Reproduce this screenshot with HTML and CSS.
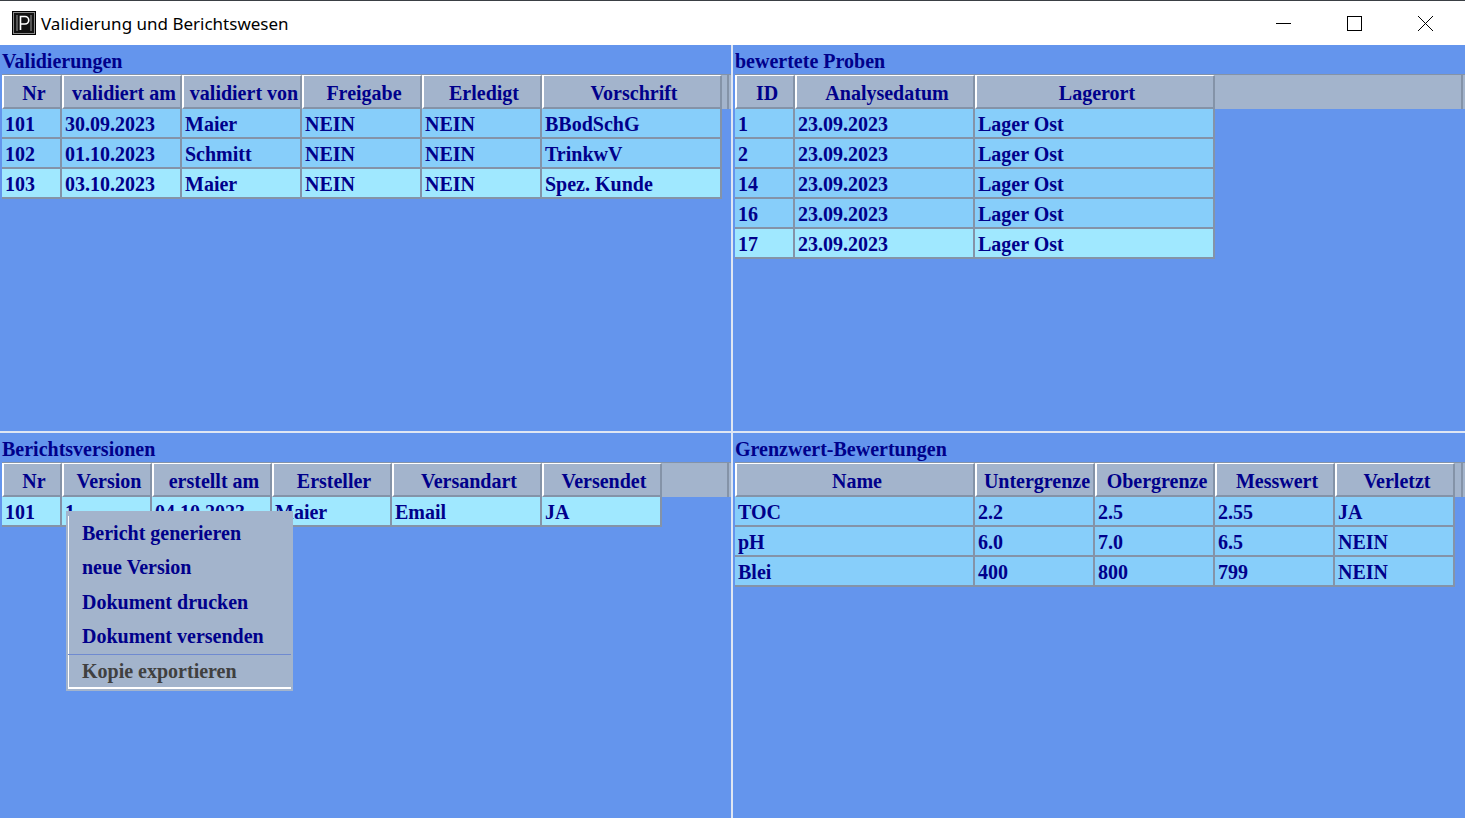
FILE: index.html
```html
<!DOCTYPE html>
<html lang="de">
<head>
    <meta charset="UTF-8">
    <title>Validierung und Berichtswesen</title>
    <link rel="stylesheet" href="styles.css">
</head>
<body>
    <div class="window">
        <div class="titlebar">
            <svg class="app-icon" width="24" height="24" viewBox="0 0 24 24">
                <rect width="24" height="24" fill="#000"/>
                <rect x="1.5" y="1.5" width="21" height="21" fill="#111" stroke="#8a8a8a"/>
                <rect x="4" y="4" width="2" height="16" fill="#555"/>
                <rect x="18" y="4" width="2" height="16" fill="#555"/>
                <path d="M8.5 19V5.5h4.5a3.7 3.7 0 0 1 0 7.5H8.5" fill="none" stroke="#fff" stroke-width="1.6"/>
            </svg>
            <span class="title">Validierung und Berichtswesen</span>
            <div class="win-buttons">
                <svg class="win-btn" width="70" height="20" viewBox="0 0 70 20"><path d="M21 10.5h15" stroke="#000" fill="none"/></svg>
                <svg class="win-btn" width="70" height="20" viewBox="0 0 70 20"><rect x="22.5" y="3.5" width="14" height="14" stroke="#000" fill="none"/></svg>
                <svg class="win-btn" width="70" height="20" viewBox="0 0 70 20"><path d="M23 3l15 15M38 3L23 18" stroke="#000" fill="none"/></svg>
            </div>
        </div>

        <div class="panes">
            <section class="pane">
                <h2>Validierungen</h2>
                <div class="grid">
                    <div class="row head">
                        <div class="cell w60">Nr</div>
                        <div class="cell w120">validiert am</div>
                        <div class="cell w120">validiert von</div>
                        <div class="cell w120">Freigabe</div>
                        <div class="cell w120">Erledigt</div>
                        <div class="cell w180">Vorschrift</div>
                        <div class="filler"></div>
                    </div>
                    <div class="row">
                        <div class="cell w60">101</div>
                        <div class="cell w120">30.09.2023</div>
                        <div class="cell w120">Maier</div>
                        <div class="cell w120">NEIN</div>
                        <div class="cell w120">NEIN</div>
                        <div class="cell w180">BBodSchG</div>
                    </div>
                    <div class="row">
                        <div class="cell w60">102</div>
                        <div class="cell w120">01.10.2023</div>
                        <div class="cell w120">Schmitt</div>
                        <div class="cell w120">NEIN</div>
                        <div class="cell w120">NEIN</div>
                        <div class="cell w180">TrinkwV</div>
                    </div>
                    <div class="row light">
                        <div class="cell w60">103</div>
                        <div class="cell w120">03.10.2023</div>
                        <div class="cell w120">Maier</div>
                        <div class="cell w120">NEIN</div>
                        <div class="cell w120">NEIN</div>
                        <div class="cell w180">Spez. Kunde</div>
                    </div>
                </div>
            </section>

            <section class="pane">
                <h2>bewertete Proben</h2>
                <div class="grid">
                    <div class="row head">
                        <div class="cell w60">ID</div>
                        <div class="cell w180">Analysedatum</div>
                        <div class="cell w240">Lagerort</div>
                        <div class="filler"></div>
                    </div>
                    <div class="row"><div class="cell w60">1</div><div class="cell w180">23.09.2023</div><div class="cell w240">Lager Ost</div></div>
                    <div class="row"><div class="cell w60">2</div><div class="cell w180">23.09.2023</div><div class="cell w240">Lager Ost</div></div>
                    <div class="row"><div class="cell w60">14</div><div class="cell w180">23.09.2023</div><div class="cell w240">Lager Ost</div></div>
                    <div class="row"><div class="cell w60">16</div><div class="cell w180">23.09.2023</div><div class="cell w240">Lager Ost</div></div>
                    <div class="row light"><div class="cell w60">17</div><div class="cell w180">23.09.2023</div><div class="cell w240">Lager Ost</div></div>
                </div>
            </section>

            <section class="pane">
                <h2>Berichtsversionen</h2>
                <div class="grid">
                    <div class="row head">
                        <div class="cell w60">Nr</div>
                        <div class="cell w90">Version</div>
                        <div class="cell w120">erstellt am</div>
                        <div class="cell w120">Ersteller</div>
                        <div class="cell w150">Versandart</div>
                        <div class="cell w120">Versendet</div>
                        <div class="filler"></div>
                    </div>
                    <div class="row light">
                        <div class="cell w60">101</div>
                        <div class="cell w90">1</div>
                        <div class="cell w120">04.10.2023</div>
                        <div class="cell w120">Maier</div>
                        <div class="cell w150">Email</div>
                        <div class="cell w120">JA</div>
                    </div>
                </div>
                <ul class="menu">
                    <li>Bericht generieren</li>
                    <li>neue Version</li>
                    <li>Dokument drucken</li>
                    <li>Dokument versenden</li>
                    <li class="disabled">Kopie exportieren</li>
                </ul>
            </section>

            <section class="pane">
                <h2>Grenzwert-Bewertungen</h2>
                <div class="grid">
                    <div class="row head">
                        <div class="cell w240">Name</div>
                        <div class="cell w120">Untergrenze</div>
                        <div class="cell w120">Obergrenze</div>
                        <div class="cell w120">Messwert</div>
                        <div class="cell w120">Verletzt</div>
                        <div class="filler"></div>
                    </div>
                    <div class="row"><div class="cell w240">TOC</div><div class="cell w120">2.2</div><div class="cell w120">2.5</div><div class="cell w120">2.55</div><div class="cell w120">JA</div></div>
                    <div class="row"><div class="cell w240">pH</div><div class="cell w120">6.0</div><div class="cell w120">7.0</div><div class="cell w120">6.5</div><div class="cell w120">NEIN</div></div>
                    <div class="row"><div class="cell w240">Blei</div><div class="cell w120">400</div><div class="cell w120">800</div><div class="cell w120">799</div><div class="cell w120">NEIN</div></div>
                </div>
            </section>
        </div>
    </div>
</body>
</html>
```

FILE: styles.css
```css
html, body {
    margin: 0;
    padding: 0;
}
body {
    background-color: #6495ed;
    font-family: "Liberation Serif", serif;
    overflow: hidden;
}
.window {
    height: 818px;
    display: flex;
    flex-direction: column;
}
.titlebar {
    height: 44px;
    flex: none;
    display: flex;
    align-items: center;
    background-color: #fff;
    border-top: 1px solid #3a3f44;
    padding-left: 12px;
}
.app-icon {
    margin-right: 5px;
}
.title {
    font-family: "Noto Sans", sans-serif;
    font-size: 17px;
    color: #000;
}
.win-buttons {
    margin-left: auto;
    display: flex;
}
.win-btn {
    display: block;
}
.panes {
    flex: 1;
    display: grid;
    grid-template-columns: 731px 732px;
    grid-template-rows: 386px 1fr;
    column-gap: 2px;
    row-gap: 2px;
    background-color: #dfe6f3;
}
.pane {
    position: relative;
    background-color: #6495ed;
    padding: 4px 0 0 2px;
}
.pane h2 {
    margin: 0;
    height: 25px;
    line-height: 25px;
    font-size: 20px;
    font-weight: bold;
    color: #00008b;
}
.row {
    display: flex;
    height: 30px;
}
.row.head {
    height: 35px;
    background-color: #a3b4cc;
    border-top: 1px solid #8493a8;
    box-sizing: border-box;
}
.cell {
    box-sizing: border-box;
    flex: none;
    padding: 2px 0 0 3px;
    font-size: 20px;
    font-weight: bold;
    line-height: 26px;
    white-space: nowrap;
    overflow: hidden;
    color: #00008b;
    background-color: #87cefa;
    border-right: 2px solid #8493a8;
    border-bottom: 2px solid #8493a8;
}
.row.light .cell {
    background-color: #a0e8ff;
}
.head .cell {
    padding: 4px 0 0 4px;
    text-align: center;
    background-color: #a3b4cc;
    border-left: 2px solid #fff;
    border-top: 1px solid #fff;
}
.filler {
    flex: 1;
    border-right: 2px solid #8493a8;
    margin-right: 2px;
}
.w60 { width: 60px; }
.w90 { width: 90px; }
.w120 { width: 120px; }
.w150 { width: 150px; }
.w180 { width: 180px; }
.w240 { width: 240px; }
.menu {
    position: absolute;
    left: 66px;
    top: 78px;
    width: 227px;
    height: 180px;
    margin: 0;
    padding: 5px 0 0 16px;
    box-sizing: border-box;
    list-style: none;
    background-color: #a3b4cc;
    font-size: 20px;
    font-weight: bold;
    line-height: 34.4px;
    color: #00008b;
}
.menu::before {
    content: "";
    position: absolute;
    left: 2px;
    top: 5px;
    height: 172px;
    border-left: 1px solid #fff;
}
.menu::after {
    content: "";
    position: absolute;
    left: 2px;
    right: 2px;
    bottom: 2px;
    border-bottom: 2px solid #fff;
}
.menu .disabled {
    color: #404040;
    position: relative;
}
.menu .disabled::before {
    content: "";
    position: absolute;
    left: -14px;
    right: 2px;
    top: 0;
    border-top: 1px solid #6f8ad0;
}
```
